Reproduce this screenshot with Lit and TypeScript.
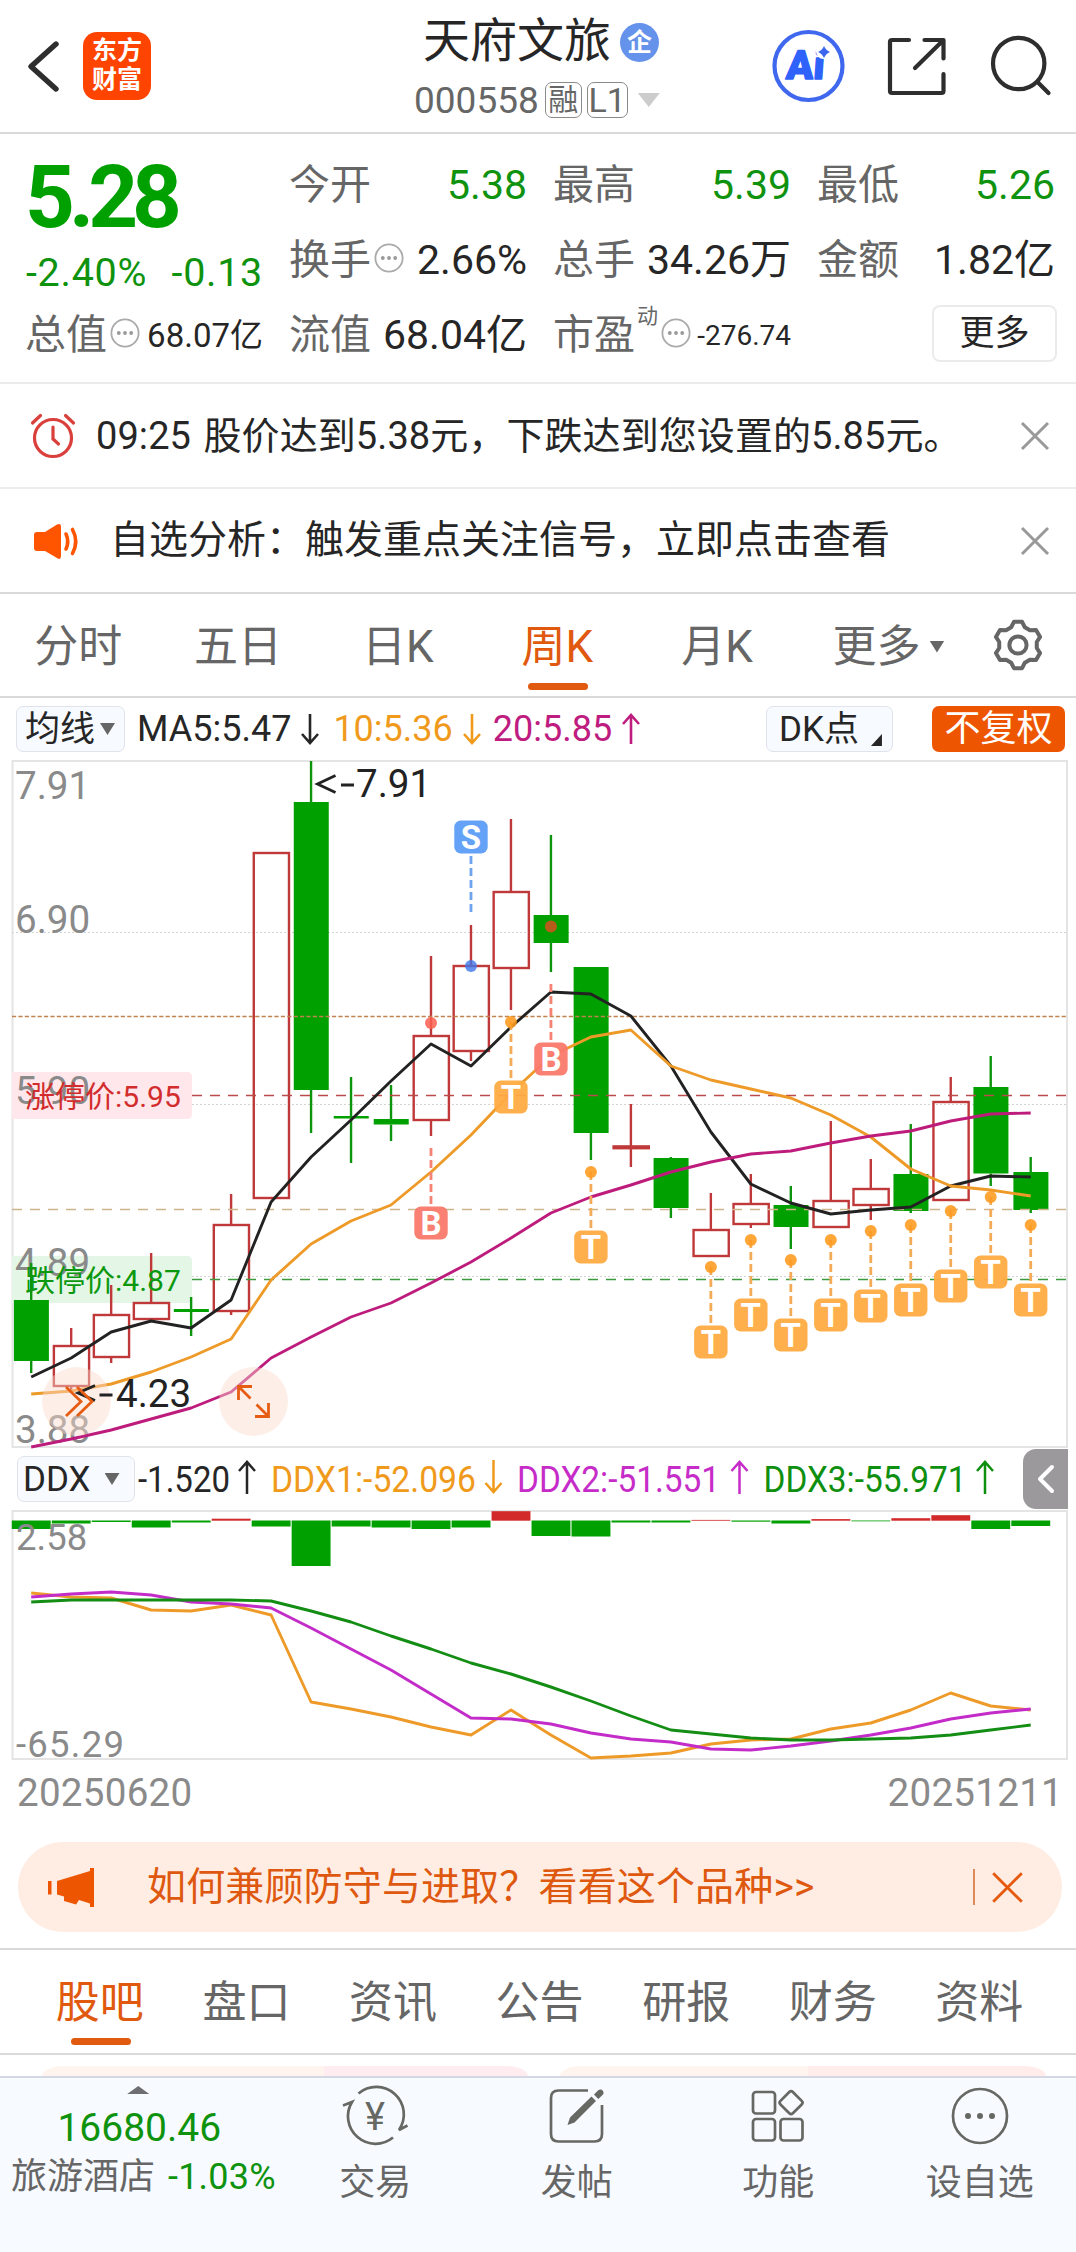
import { LitElement, html, css, svg, nothing } from "lit";
import { customElement } from "lit/decorators.js";
import { classMap } from "lit/directives/class-map.js";

type Candle = { up: boolean; high: number; top: number; bottom: number; low: number };

const X0 = 31.2;
const STEP = 39.98;
const cx = (i: number) => X0 + STEP * i;

const c = (up: number, high: number, top: number, bottom: number, low: number): Candle => ({ up: !!up, high, top, bottom, low });

const CANDLES: Candle[] = [
  c(0, 1263, 1300, 1361, 1373), c(1, 1328, 1346, 1386, 1391), c(1, 1285, 1315, 1357, 1363),
  c(1, 1253, 1303, 1319, 1319), c(0, 1297, 1309, 1312, 1336), c(1, 1194, 1225, 1311, 1315),
  c(1, 853, 853, 1198, 1198), c(0, 761, 802, 1090, 1133), c(0, 1077, 1116, 1118.5, 1163),
  c(0, 1085, 1119, 1124.5, 1141), c(1, 956, 1036, 1120, 1136), c(1, 925, 966, 1051, 1061),
  c(1, 819, 892, 968, 1010), c(0, 835, 915, 943, 972), c(0, 967, 967, 1133, 1160),
  c(1, 1104, 1146.4, 1148.2, 1167), c(0, 1157, 1158, 1208, 1218), c(1, 1193, 1230, 1256, 1256),
  c(1, 1174, 1204, 1224, 1228), c(0, 1186, 1205, 1227, 1249), c(1, 1121, 1201, 1227, 1228),
  c(1, 1159, 1189, 1205, 1220), c(0, 1124, 1174, 1211, 1213), c(1, 1077, 1102, 1200, 1200),
  c(0, 1056, 1087, 1173.5, 1186), c(0, 1157, 1172, 1210, 1213),
];

const MA5 = [1377, 1358, 1332, 1321, 1328, 1300, 1202, 1157, 1120, 1081, 1044, 1066, 1027, 992, 994, 1016, 1066, 1132, 1184, 1203, 1214, 1210, 1207, 1186, 1176, 1177];
const MA10 = [1394, 1391, 1384, 1372, 1357, 1339, 1280, 1244, 1221, 1205, 1172, 1135, 1093, 1056, 1037, 1030, 1066, 1080, 1089, 1098, 1115, 1137, 1169, 1186, 1190, 1196];
const MA20 = [1447, 1439, 1430, 1419, 1408, 1392, 1358, 1337, 1317, 1303, 1283, 1262, 1238, 1213, 1197, 1185, 1172, 1162, 1154, 1151, 1143, 1136, 1131, 1121, 1114, 1113];

const T_MARKS: [number, number][] = [[12, 1022], [14, 1172], [17, 1267], [18, 1240], [19, 1260], [20, 1240], [21, 1231], [22, 1225], [23, 1211], [24, 1197], [25, 1225]];

const DDX_BARS = [8.5, 3, 1.5, 7, 2, -2, 6, 45.5, 6, 7, 8.5, 7, -9.5, 15.5, 16, 2, 2, -0.8, 1.2, 3, -1.6, 0.8, -2.5, -5.5, 8.5, 5.5];
const DDX1 = [1593, 1597, 1598, 1610, 1611, 1605, 1615, 1702, 1709, 1717, 1727, 1735, 1710, 1735, 1758, 1756, 1753, 1744, 1740, 1739, 1729, 1723, 1710, 1693, 1706, 1710];
const DDX2 = [1597, 1594, 1592, 1595, 1602, 1604, 1608, 1628, 1649, 1670, 1694, 1718, 1719, 1724, 1733, 1739, 1742, 1749, 1750, 1746, 1741, 1735, 1728, 1719, 1713, 1709];
const DDX3 = [1602, 1600, 1600, 1600, 1600, 1600, 1601, 1611, 1622, 1636, 1649, 1663, 1674, 1687, 1701, 1716, 1730, 1734, 1738, 1740, 1740, 1739, 1738, 1735, 1730, 1725];

const points = (ys: number[]) => ys.map((y, i) => `${cx(i).toFixed(1)},${y}`).join(" ");

const gearPath = () => {
  const p: string[] = [];
  for (let k = 0; k < 6; k++) {
    const base = -90 + 60 * k;
    for (const [d, r] of [[-21, 19], [-10, 23.5], [10, 23.5], [21, 19]]) {
      const a = ((base + d) * Math.PI) / 180;
      p.push(`${(26 + r * Math.cos(a)).toFixed(2)} ${(26 + r * Math.sin(a)).toFixed(2)}`);
    }
  }
  return `M${p.join("L")}Z`;
};

const closeIcon = (size: number, cls: string) => html`<svg class=${cls} width=${size} height=${size} viewBox="0 0 30 30"><path d="M2 2L28 28M28 2L2 28" /></svg>`;
const moreDots = html`<svg class="dots" width="30" height="30" viewBox="0 0 30 30"><circle cx="15" cy="15" r="13.6" /><g><circle cx="8.8" cy="15" r="1.9" /><circle cx="15" cy="15" r="1.9" /><circle cx="21.2" cy="15" r="1.9" /></g></svg>`;
const arrow = (up: boolean) => html`<svg class="arrow" width="20" height="32" viewBox="0 0 20 32"><path d=${up ? "M10 31V2M2 11L10 2L18 11" : "M10 1V30M2 21L10 30L18 21"} /></svg>`;

@customElement("app-root")
export class AppRoot extends LitElement {
  static styles = css`
    :host { display: block; width: 1076px; height: 2252px; overflow: hidden; background: #fff; color: #262626;
      font-family: Roboto, "Noto Sans CJK SC", sans-serif; line-height: 1; }
    * { box-sizing: border-box; }
    svg { display: block; flex: none; fill: none; overflow: visible; }
    span, div { white-space: nowrap; }
    .green { color: #0f930f; }
    .page { display: flex; flex-direction: column; height: 2252px; }

    .header { height: 134px; flex: none; border-bottom: 2px solid #dadada; display: flex; align-items: flex-start; }
    .h-left { width: 414px; flex: none; display: flex; padding: 32px 0 0 26px; }
    .back { margin-top: 6px; stroke: #2e2e2e; stroke-width: 5.4; stroke-linecap: round; stroke-linejoin: round; }
    .logo { margin-left: 21px; width: 68px; height: 68px; border-radius: 14px; background: #ff4400; color: #fff; font-weight: 700;
      font-size: 25px; line-height: 29px; padding-top: 4px; text-align: center; }
    .h-mid { width: 250px; flex: none; padding-top: 13px; }
    .name { display: flex; align-items: center; font-size: 47px; height: 54px; padding-left: 9px; }
    .badge { width: 39px; height: 39px; border-radius: 50%; background: #6592ea; color: #fff; font-size: 25px; font-weight: 700;
      display: flex; align-items: center; justify-content: center; margin-left: 9px; margin-top: 4px; }
    .code { display: flex; align-items: center; font-size: 37px; color: #666; height: 40px; margin-top: 13px; }
    .tag { border: 1.6px solid #8a8a8a; border-radius: 7px; height: 36px; width: 37px; font-size: 30px; margin-left: 6px; display: flex; align-items: center; justify-content: center; }
    .tag.wide { width: 41px; font-size: 34px; margin-left: 5px; }
    .caret { width: 22px; height: 14px; background: #ccc; clip-path: polygon(0 0, 100% 0, 50% 100%); margin-left: 10px; }
    .h-right { flex: 1; display: flex; padding: 29px 0 0 108px; }
    .h-right svg { margin-right: 41px; stroke: #2e2e2e; stroke-width: 4.2; stroke-linecap: round; stroke-linejoin: round; }
    .h-right svg:last-child { margin-right: 0; }
    .h-right .ai { stroke: #3f68ee; margin-right: 43px; }
    .ai text { fill: #2f62fa; stroke: #2f62fa; stroke-width: 1.4; font: 900 40px Roboto, sans-serif; }
    .ai .halo { fill: #fff; stroke: none; }
    .ai .spark { fill: #3a66f0; stroke: none; }

    .quote { height: 250px; flex: none; border-bottom: 2px solid #ebebeb; padding: 14px 0 0 25px; display: grid;
      grid-template-columns: 238px 238px 238px 238px; column-gap: 26px; grid-template-rows: 75px 75px 75px; }
    .price { grid-row: span 2; display: flex; flex-direction: column; }
    .last { font-size: 87px; font-weight: 700; color: #00a000; letter-spacing: -6px; line-height: 98px; }
    .chg { display: flex; justify-content: space-between; font-size: 39.5px; line-height: 54px; padding-left: 1px; }
    .chg span { letter-spacing: 0.7px; }
    .cell { display: flex; align-items: center; font-size: 41px; height: 75px; }
    .cell .k { color: #666; }
    .cell .v { margin-left: auto; }
    .cell .v.small { font-size: 33px; }
    .cell .v.tiny { font-size: 28px; padding-top: 1px; }
    .cell .sup { font-size: 21px; color: #666; align-self: flex-start; margin-top: 8px; margin-left: 2px; }
    .dots { stroke: #aaa; stroke-width: 1.8; margin: -6px 0 0 3px; }
    .dots g { fill: #999; stroke: none; }
    .more-btn { width: 125px; height: 57px; border: 2px solid #ebebeb; border-radius: 8px; margin-left: auto; margin-top: -5px; margin-right: -2px; font-size: 35px; display: flex; align-items: center; justify-content: center; }

    .alert { height: 105px; flex: none; border-bottom: 2px solid #ececec; display: flex; align-items: center; font-size: 38px; padding: 0 26px 0 30px; }
    .alert.last-alert { border-color: #dadada; font-size: 39px; }
    .alert .msg { margin-left: 20px; word-spacing: 3px; letter-spacing: 0.08px; }
    .last-alert .msg { margin-left: 30px; letter-spacing: 0; }
    .x-gray { margin-left: auto; stroke: #999; stroke-width: 3; }
    .clock { stroke: #d9403c; stroke-width: 3.2; stroke-linecap: round; }

    .tabs { height: 104px; flex: none; border-bottom: 2px solid #dadada; display: flex; color: #666; font-size: 44px; }
    .tab { width: 159.7px; display: flex; align-items: center; justify-content: center; position: relative; padding: 3px 3px 0 0; }
    .tab.on { color: #e0590e; }
    .tab.on::after { content: ""; position: absolute; bottom: 6px; left: 50%; margin-left: -31px; width: 60px; height: 7px; border-radius: 4px; background: #e05a10; }
    .tab.more { width: 184px; justify-content: flex-start; padding-left: 34px; }
    .tri { background: #666; clip-path: polygon(0 0, 100% 0, 50% 100%); width: 15px; height: 12px; margin-left: 9px; }
    .gear { align-self: center; margin-left: 10px; stroke: #666; stroke-width: 4; stroke-linejoin: round; }

    .legend { height: 62px; flex: none; display: flex; align-items: center; padding: 0 11px 0 16px; font-size: 36px; }
    .chip { height: 46px; border: 1.5px solid #e0e2ec; border-radius: 7px; background: #f7faff; display: flex; align-items: center; font-size: 35px; }
    .chip.ma { width: 109px; padding-left: 8px; }
    .chip.ma .tri { margin-left: 5px; }
    .chip.ddx { width: 118px; padding-left: 5px; margin-left: 1px; }
    .chip.ddx .tri { margin-left: 14px; height: 12px; }
    .chip.dk { width: 127px; margin-left: auto; padding-left: 12px; align-items: center; }
    .corner { width: 11px; height: 12px; background: #262626; clip-path: polygon(100% 0, 100% 100%, 0 100%); align-self: flex-end; margin: 0 0 5px 12px; }
    .adj { width: 133px; height: 46px; margin-left: 39px; border-radius: 7px; background: #ee5500; color: #fff; font-size: 36px; display: flex; align-items: center; justify-content: center; }
    .arrow { stroke: currentColor; stroke-width: 2.6; margin-left: 9px; }
    .ma5 { display: flex; align-items: center; margin-left: 12px; }
    .ma10 { display: flex; align-items: center; margin-left: 13px; color: #f09a1c; }
    .ma20 { display: flex; align-items: center; margin-left: 11px; color: #bf1c80; }

    .chart { font-family: Roboto, "Noto Sans CJK SC", sans-serif; }
    .frame { stroke: #e4e4e4; stroke-width: 2; }
    .dot-grid { stroke: #d4d4d4; stroke-width: 1.2; stroke-dasharray: 2 2; }
    .axis { fill: #8a8a8a; font-size: 38.6px; }
    .axis.sm { font-size: 36.5px; }
    .note { font-size: 38.6px; }
    .note text { fill: #222; }
    .up-line { stroke: #c0393a; stroke-width: 2.4; }
    .down-line { stroke: #0d950d; stroke-width: 2.4; }
    .down-fill { fill: #00a000; }
    .up-fill { fill: #d22a2a; }
    .ln { stroke-width: 2.9; stroke-linejoin: round; }
    .black { stroke: #222; } .orange { stroke: #ee9a28; } .magenta { stroke: #be1c7c; } .purple { stroke: #c32cc8; } .dgreen { stroke: #138d13; }
    .mk { font-size: 33px; font-weight: 700; fill: #fff; text-anchor: middle; }
    .handle { width: 45px; height: 60px; background: #9b999c; border-radius: 13px 0 0 13px; align-self: center; display: flex; align-items: center; justify-content: center; margin-left: auto; margin-right: -4px; }
    .handle svg { stroke: #fff; stroke-width: 4; stroke-linecap: round; stroke-linejoin: round; }
    .ddx-text { font-size: 37px; margin-left: 2px; }
    .ddx-row { padding-right: 12px; }

    .dates { height: 82px; flex: none; display: flex; justify-content: space-between; padding: 13px 13px 0 17px; font-size: 38.6px; letter-spacing: 0.25px; color: #8a8a8a; line-height: 40px; }
    .banner { margin: 0 14px 16px 18px; height: 90px; flex: none; border-radius: 45px; background: #ffede4; color: #de590f; font-size: 39px; display: flex; align-items: center; padding: 0 38px 0 29px; }
    .banner .msg { margin-left: 52px; letter-spacing: 0.15px; }
    .banner .bar { width: 2px; height: 36px; background: #e08a5c; margin-left: auto; margin-right: 16px; }
    .x-or { stroke: #e65a10; stroke-width: 2.6; }
    .tabs.sub { border-top: 2px solid #dadada; height: 107px; padding: 0 22px 0 27px; }
    .sub .tab { width: 146.6px; padding: 3px 1px 0 0; }
    .sub .tab.on::after { bottom: 8px; margin-left: -29px; }
    .cards { height: 21px; flex: none; display: flex; gap: 32px; padding: 11px 30px 0 42px; }
    .card { height: 10px; width: 486px; border-radius: 22px 22px 0 0 / 10px 10px 0 0; background: linear-gradient(90deg, #fff5ee 0 58%, #ffecf1 58%); }
    .card.b { background: linear-gradient(90deg, #fff4ee 0 51%, #ffeceb 51%); }

    .footer { flex: 1; background: #f7faff; border-top: 2px solid #d4d8e2; display: grid; grid-template-columns: 274.5px repeat(4, 201.5px); color: #666; font-size: 36px; }
    .index { display: flex; flex-direction: column; align-items: center; }
    .index .up-tri { width: 22px; height: 8px; background: #6d6d72; clip-path: polygon(50% 0, 100% 100%, 0 100%); margin: 8px 0 0 2px; }
    .index .num { font-size: 39px; margin-top: 14px; line-height: 40px; margin-left: 4px; }
    .index .row { margin-top: 8px; align-self: stretch; padding-left: 11px; display: flex; align-items: center; height: 42px; }
    .index .pct { margin-left: 13px; font-size: 36px; letter-spacing: 0.2px; }
    .nav { display: flex; flex-direction: column; align-items: center; padding-top: 7px; }
    .nav svg { stroke: #666864; stroke-width: 2.7; }
    .nav .lbl { margin-top: 15px; line-height: 42px; }
    .yen { font-size: 38px; fill: #666864; stroke: none; text-anchor: middle; }
    .solid { fill: #666864; stroke: none; }
  `;

  private candle(k: Candle, i: number) {
    const x = cx(i);
    const cls = k.up ? "up-line" : "down-line";
    return svg`
      ${k.high < k.top ? svg`<line class=${cls} x1=${x} x2=${x} y1=${k.high} y2=${k.top} />` : nothing}
      ${k.low > k.bottom ? svg`<line class=${cls} x1=${x} x2=${x} y1=${k.bottom} y2=${k.low} />` : nothing}
      ${k.up
        ? svg`<rect class=${cls} x=${x - 17.3} y=${k.top} width="35.2" height=${k.bottom - k.top} />`
        : svg`<rect class="down-fill" x=${x - 17.3} y=${k.top} width="35" height=${k.bottom - k.top} />`}`;
  }

  private mark(i: number, y: number, letter: string, color: string) {
    const x = cx(i);
    return svg`<rect x=${x - 16.7} y=${y - 16.5} width="33.4" height="33" rx="6.5" fill=${color} fill-opacity="0.95" />
      <text class="mk" x=${x} y=${y + 11.8}>${letter}</text>`;
  }

  private mainChart() {
    return html`<svg class="chart" width="1076" height="688" viewBox="0 760 1076 688">
      <path class="frame" d="M12.5 761H1067V1447H12.5Z" />
      ${[932.5, 1104.5, 1276.5].map((y) => svg`<line class="dot-grid" x1="12" x2="1067" y1=${y} y2=${y} />`)}
      <path d="M12 1072H187q5 0 5 5V1114q0 5 -5 5H12Z" fill="#ffe7eb" />
      <path d="M12 1256H187q5 0 5 5V1298q0 5 -5 5H12Z" fill="#e4f6e5" />
      ${["7.91", "6.90", "5.90", "4.89", "3.88"].map((t, i) => svg`<text class="axis" x="15" y=${[799, 933, 1104, 1276, 1443][i]}>${t}</text>`)}
      ${CANDLES.map((k, i) => this.candle(k, i))}
      <text x="25" y="1107" font-size="30" fill="#d22c2c">涨停价:5.95</text>
      <text x="25" y="1291" font-size="30" fill="#0b980f">跌停价:4.87</text>
      <g stroke-width="1.5">
        <line x1="12" x2="1067" y1="1016.5" y2="1016.5" stroke="#c0824e" stroke-dasharray="4.2 2.2" />
        <line x1="192" x2="1067" y1="1095.5" y2="1095.5" stroke="#bb4a4a" stroke-dasharray="10 8" />
        <line x1="12" x2="1067" y1="1209.5" y2="1209.5" stroke="#cdb48c" stroke-dasharray="10 8" />
        <line x1="192" x2="1067" y1="1279.5" y2="1279.5" stroke="#3f9a3f" stroke-dasharray="10 8" />
      </g>
      <polyline class="ln black" points=${points(MA5)} />
      <polyline class="ln orange" points=${points(MA10)} />
      <polyline class="ln magenta" points=${points(MA20)} />
      <g stroke-width="2.8" stroke-dasharray="8 4">
        <line x1=${cx(10)} x2=${cx(10)} y1="1148" y2="1205" stroke="#f58273" />
        <line x1=${cx(13)} x2=${cx(13)} y1="984" y2="1041" stroke="#f58273" />
        <line x1=${cx(11)} x2=${cx(11)} y1="856" y2="913" stroke="#6ea4ee" />
        ${T_MARKS.map(([i, y]) => svg`<line x1=${cx(i)} x2=${cx(i)} y1=${y} y2=${y + 57} stroke="#f3ab58" />`)}
      </g>
      <circle cx=${cx(10)} cy="1023" r="6" fill="#fb5f50" fill-opacity="0.85" />
      <circle cx=${cx(11)} cy="966" r="6" fill="#3f77ea" fill-opacity="0.8" />
      <circle cx=${cx(13)} cy="926.5" r="6" fill="#b85c1c" />
      ${T_MARKS.map(([i, y]) => svg`<circle cx=${cx(i)} cy=${y} r="6" fill="#ff9a1e" fill-opacity="0.88" />${this.mark(i, y + 75, "T", "#ffab42")}`)}
      ${this.mark(10, 1223, "B", "#f9796a")}${this.mark(13, 1059, "B", "#f9796a")}${this.mark(11, 837, "S", "#5c9df8")}
      <g class="note">
        <path d="M335.5 775.5L317.5 784L335.5 792.5M341 785H354" stroke="#222" stroke-width="2.8" />
        <text x="356" y="797">7.91</text>
      </g>
      <circle cx="76.5" cy="1401.5" r="34.5" fill="#fbd9cc" fill-opacity="0.45" />
      <circle cx="253.5" cy="1401.5" r="34.5" fill="#fbd9cc" fill-opacity="0.45" />
      <g class="note">
        <path d="M95 1385.5L78 1393L95 1400.5M99.5 1395H112.5" stroke="#222" stroke-width="2.8" />
        <text x="116" y="1407">4.23</text>
      </g>
      <g stroke="#e65c12" stroke-width="2.8">
        <path d="M66 1387L81 1401.5L66 1416M77 1387L92 1401.5L77 1416" />
        <path d="M252 1386.5H238.5V1400M239 1387L250.5 1398.5M255 1416.5H268.5V1403M268 1416L256.5 1404.5" />
      </g>
    </svg>`;
  }

  private ddxLegend() {
    const items: [string, number, number, string, boolean, number][] = [
      ["-1.520", 138, 92, "#262626", true, 247],
      ["DDX1:-52.096", 271, 205, "#f09a1c", false, 493.5],
      ["DDX2:-51.551", 517, 203, "#c62cc8", true, 739.5],
      ["DDX3:-55.971", 763.5, 203, "#0f8f0f", true, 985],
    ];
    return html`<svg class="chart ddx-text" width="883" height="62" viewBox="137 1448 883 62">
      ${items.map(([t, x, w, col, up, ax]) => svg`
        <text x=${x} y="1491.5" fill=${col} textLength=${w} lengthAdjust="spacingAndGlyphs">${t}</text>
        <path stroke=${col} stroke-width="2.5" d=${up ? `M${ax} 1494V1462M${ax - 8} 1471L${ax} 1462L${ax + 8} 1471` : `M${ax} 1460V1492M${ax - 8} 1483L${ax} 1492L${ax + 8} 1483`} />`)}
    </svg>`;
  }

  private ddxChart() {
    return html`<svg class="chart" width="1076" height="250" viewBox="0 1510 1076 250">
      <path class="frame" d="M12.5 1511H1067V1759H12.5Z" />
      ${DDX_BARS.map((h, i) => svg`<rect class=${h < 0 ? "up-fill" : "down-fill"} x=${cx(i) - 19.4} width="38.9" y=${h < 0 ? 1520.7 + h : 1520.5} height=${Math.abs(h)} />`)}
      <text class="axis sm" x="16" y="1550">2.58</text>
      <text class="axis sm" x="16" y="1756.5" textLength="108">-65.29</text>
      <polyline class="ln orange" points=${points(DDX1)} />
      <polyline class="ln purple" points=${points(DDX2)} />
      <polyline class="ln dgreen" points=${points(DDX3)} />
    </svg>`;
  }

  render() {
    return html`<div class="page">
      <div class="header">
        <div class="h-left">
          <svg class="back" width="36" height="56" viewBox="0 0 36 56"><path d="M30 6L5 28.5L30 51" /></svg>
          <div class="logo">东方<br />财富</div>
        </div>
        <div class="h-mid">
          <div class="name"><span>天府文旅</span><span class="badge">企</span></div>
          <div class="code"><span>000558</span><span class="tag">融</span><span class="tag wide">L1</span><span class="caret"></span></div>
        </div>
        <div class="h-right">
          <svg class="ai" width="73" height="74" viewBox="0 0 73 74"><circle cx="36.5" cy="37" r="34" /><text x="14" y="50.5" transform="skewX(-4) translate(3 0)">Ai</text><circle class="halo" cx="51.5" cy="22.5" r="7.5" /><path class="spark" d="M52 17Q54 21.5 58 23Q54 24.5 52 29Q50 24.5 46 23Q50 21.5 52 17Z" /></svg>
          <svg width="58" height="74" viewBox="888 29 58 74"><path d="M909 40H892Q890 40 890 42V91Q890 93 892 93H941.5Q943.5 93 943.5 91V74M924.5 40H943.5V58.5M942 41.5L915 68" /></svg>
          <svg width="64" height="74" viewBox="987 29 64 74"><circle cx="1018.7" cy="63.5" r="25.7" /><path d="M1037.5 82L1048.5 93" /></svg>
        </div>
      </div>

      <div class="quote">
        <div class="price"><span class="last">5.28</span><div class="chg green"><span>-2.40%</span><span>-0.13</span></div></div>
        <div class="cell"><span class="k">今开</span><span class="v green">5.38</span></div>
        <div class="cell"><span class="k">最高</span><span class="v green">5.39</span></div>
        <div class="cell"><span class="k">最低</span><span class="v green">5.26</span></div>
        <div class="cell"><span class="k">换手</span>${moreDots}<span class="v">2.66%</span></div>
        <div class="cell"><span class="k">总手</span><span class="v">34.26万</span></div>
        <div class="cell"><span class="k">金额</span><span class="v">1.82亿</span></div>
        <div class="cell"><span class="k">总值</span>${moreDots}<span class="v small">68.07亿</span></div>
        <div class="cell"><span class="k">流值</span><span class="v">68.04亿</span></div>
        <div class="cell"><span class="k">市盈</span><span class="sup">动</span>${moreDots}<span class="v tiny">-276.74</span></div>
        <div class="cell"><span class="more-btn">更多</span></div>
      </div>

      <div class="alert">
        <svg class="clock" width="46" height="46" viewBox="30 412 46 46"><circle cx="53" cy="437" r="18.5" /><path d="M53 426V438L58.5 443M32.5 422L40.5 414.5M73.5 422L65.5 414.5" /></svg>
        <span class="msg">09:25 股价达到5.38元，下跌达到您设置的5.85元。</span>${closeIcon(30, "x-gray")}
      </div>
      <div class="alert last-alert">
        <svg width="50" height="40" viewBox="30 520 50 40"><path fill="#ff5500" d="M37 531H45L57 523.5Q61 521.5 61 526V555Q61 559.5 57 557L45 550H37Q34 550 34 547V534Q34 531 37 531Z" /><path stroke="#ff5500" stroke-width="3.6" stroke-linecap="round" d="M66 533Q69.5 540.5 66 548M72.5 528.5Q79 540.5 72.5 552.5" /></svg>
        <span class="msg">自选分析：触发重点关注信号，立即点击查看</span>${closeIcon(30, "x-gray")}
      </div>

      <div class="tabs">
        ${["分时", "五日", "日K", "周K", "月K"].map((t) => html`<div class=${classMap({ tab: true, on: t === "周K" })}>${t}</div>`)}
        <div class="tab more">更多<span class="tri"></span></div>
        <svg class="gear" width="52" height="52" viewBox="0 0 52 52"><path d=${gearPath()} /><circle cx="26" cy="26" r="8.6" /></svg>
      </div>

      <div class="legend">
        <div class="chip ma">均线<span class="tri"></span></div>
        <div class="ma5">MA5:5.47${arrow(false)}</div>
        <div class="ma10">10:5.36${arrow(false)}</div>
        <div class="ma20">20:5.85${arrow(true)}</div>
        <div class="chip dk">DK点<span class="corner"></span></div>
        <div class="adj">不复权</div>
      </div>
      ${this.mainChart()}
      <div class="legend ddx-row">
        <div class="chip ddx">DDX<span class="tri"></span></div>
        ${this.ddxLegend()}
        <div class="handle"><svg width="20" height="30" viewBox="0 0 20 30"><path d="M16 3L4 15L16 27" /></svg></div>
      </div>
      ${this.ddxChart()}
      <div class="dates"><span>20250620</span><span>20251211</span></div>

      <div class="banner">
        <svg width="48" height="42" viewBox="47 1865 48 42"><path fill="#ee5500" d="M48 1880H51.5V1893.5H48ZM57 1880L90 1870V1867H94V1906H90V1902.5L79 1899L76 1903.5L64 1900V1895.5L57 1893.5Z" /></svg>
        <span class="msg">如何兼顾防守与进取？看看这个品种&gt;&gt;</span>
        <span class="bar"></span>${closeIcon(33, "x-or")}
      </div>

      <div class="tabs sub">
        ${["股吧", "盘口", "资讯", "公告", "研报", "财务", "资料"].map((t, i) => html`<div class=${classMap({ tab: true, on: i === 0 })}>${t}</div>`)}
      </div>
      <div class="cards"><div class="card"></div><div class="card b"></div></div>

      <div class="footer">
        <div class="index">
          <span class="up-tri"></span>
          <span class="num green">16680.46</span>
          <div class="row"><span>旅游酒店</span><span class="pct green">-1.03%</span></div>
        </div>
        <div class="nav">
          <svg width="66" height="62" viewBox="342.5 2085 66 62"><path d="M359 2093.5A27.5 27.5 0 0 1 399.5 2130L408 2125.5M393.5 2137.5A27.5 27.5 0 0 1 352.5 2102L343.5 2105.5" /><text class="yen" x="375.5" y="2130">¥</text></svg>
          <span class="lbl">交易</span>
        </div>
        <div class="nav">
          <svg width="62" height="62" viewBox="546.5 2085 62 62"><path d="M588.5 2090.5H559Q551.5 2090.5 551.5 2098V2134Q551.5 2141.5 559 2141.5H595Q602.5 2141.5 602.5 2134V2105" /><path class="solid" d="M568 2125L570.5 2117.5L592 2096.5L596.5 2101L575 2122.5ZM594.5 2094.5L598.5 2090.5Q601.5 2088.5 603.5 2091Q605 2093.5 602.5 2095.5L598.8 2099Z" /></svg>
          <span class="lbl">发帖</span>
        </div>
        <div class="nav">
          <svg width="62" height="62" viewBox="747.5 2085 62 62"><rect x="753.5" y="2092" width="22" height="21.5" rx="3" /><rect x="753.5" y="2119" width="22" height="21.5" rx="3" /><rect x="781" y="2119" width="22" height="21.5" rx="3" /><rect x="783" y="2094" width="17.5" height="17.5" rx="2.5" transform="rotate(45 791.75 2102.5)" /></svg>
          <span class="lbl">功能</span>
        </div>
        <div class="nav">
          <svg width="62" height="62" viewBox="948 2085 62 62"><circle cx="979" cy="2116" r="27" /><g class="solid"><circle cx="967" cy="2116" r="3" /><circle cx="979" cy="2116" r="3" /><circle cx="991" cy="2116" r="3" /></g></svg>
          <span class="lbl">设自选</span>
        </div>
      </div>
    </div>`;
  }
}
